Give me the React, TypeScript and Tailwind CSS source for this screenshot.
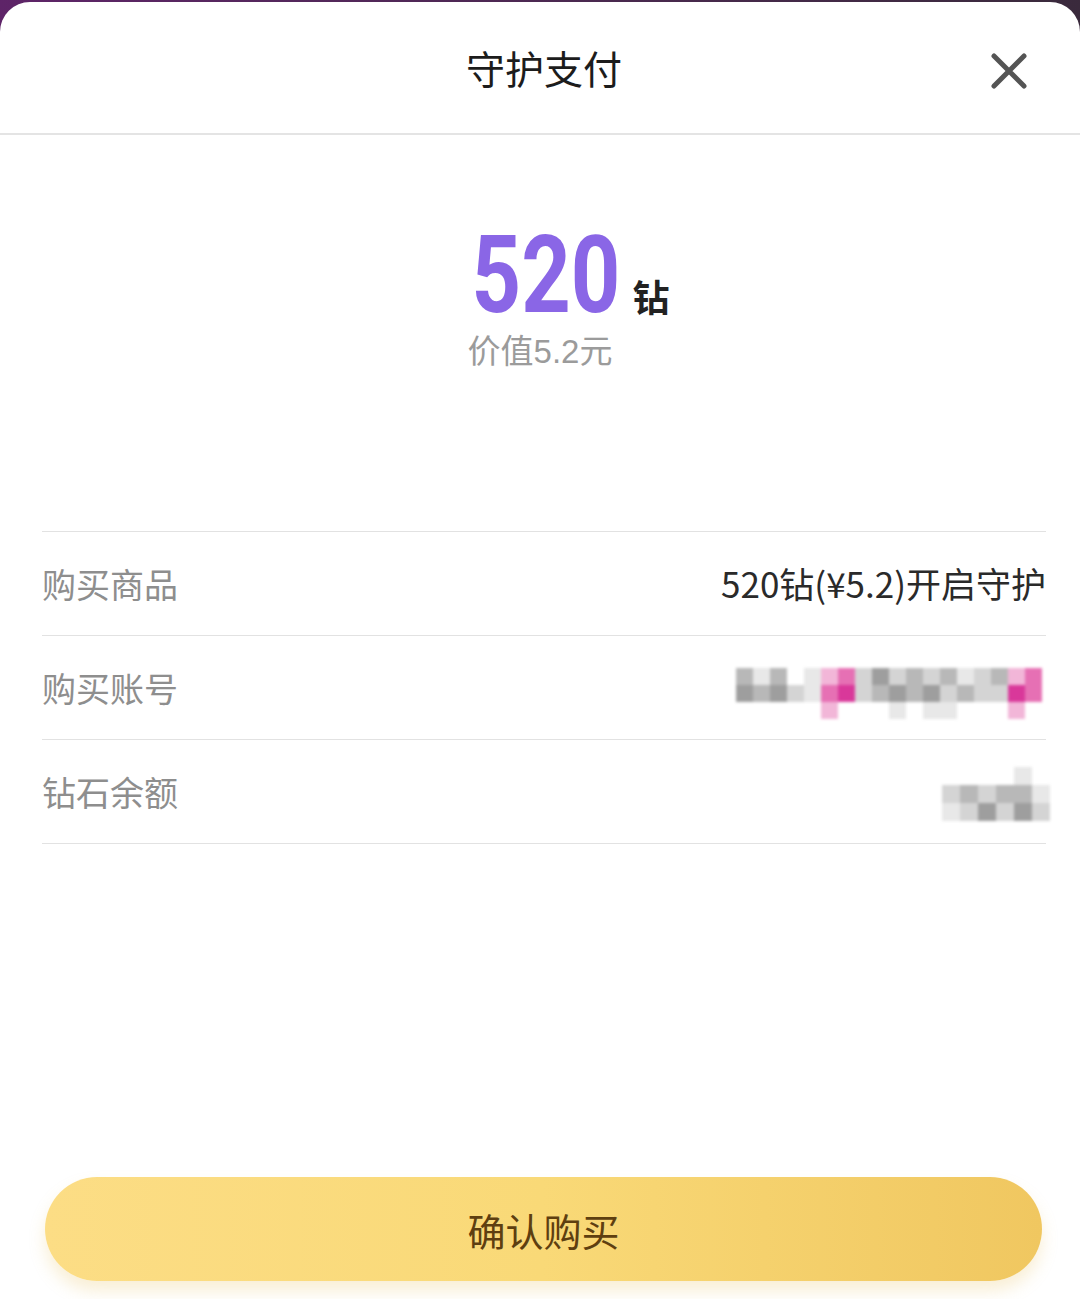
import React from "react";

const cjk = "'Noto Sans CJK SC', 'Noto Sans', sans-serif";

// pixel mosaic used to hide account / balance values
const Mosaic: React.FC<{ cells: string[][]; size?: number }> = ({ cells, size = 20 }) => {
  const w = cells[0].length * size;
  const h = cells.length * size;
  return (
    <svg width={w} height={h} viewBox={`0 0 ${w} ${h}`} style={{ filter: "blur(1.8px)" }}>
      {cells.map((row, y) =>
        row.map((c, x) =>
          c ? <rect key={`${x}-${y}`} x={x * size} y={y * size} width={size} height={size} fill={c} /> : null
        )
      )}
    </svg>
  );
};

const g1 = "#b8b8b8";
const g2 = "#9e9e9e";
const g3 = "#d4d4d4";
const g4 = "#e8e8e8";
const p1 = "#e670b4";
const p2 = "#d9389a";
const p3 = "#f2b6d8";

const accountCells: string[][] = [
  [g1, g4, g1, "", g4, p3, p1, g3, g2, g3, g1, g3, g1, g4, g3, g1, p3, p1],
  [g2, g1, g2, g3, g4, p1, p2, g3, g1, g2, g1, g2, g3, g1, g3, g3, p2, p1],
  ["", "", "", "", "", p3, "", "", "", g4, "", g4, g4, "", "", "", p3, ""],
];

const balanceCells: string[][] = [
  ["", "", "", "", g4, ""],
  [g3, g1, g3, g1, g1, g4],
  [g4, g3, g2, g3, g2, g3],
];

const Row: React.FC<{ label: string; children: React.ReactNode }> = ({ label, children }) => (
  <div className="flex h-[104px] items-center justify-between border-b border-[#e2e2e2]">
    <span className="text-[34px] text-[#8e8e8e]">{label}</span>
    {children}
  </div>
);

const App: React.FC = () => {
  return (
    <div className="h-[1299px] w-[1080px] overflow-hidden bg-gradient-to-r from-[#5e2468] to-[#3a2a3c] pt-[2px]">
      <div className="flex h-full flex-col rounded-t-[30px] bg-white" style={{ fontFamily: cjk }}>
        <div className="relative flex h-[133px] shrink-0 items-center justify-center border-b-2 border-[#e4e4e4]">
          <span className="ml-[8px] text-[39px] text-[#1c1c1c]">守护支付</span>
          <button type="button" className="absolute right-[52px] top-[50px] flex h-[38px] w-[38px] items-center justify-center">
            <svg width="38" height="38" viewBox="0 0 38 38">
              <path d="M4 4L34 34M34 4L4 34" stroke="#545454" strokeWidth="5" strokeLinecap="round" />
            </svg>
          </button>
        </div>

        <div className="flex flex-col items-center pt-[98px]">
          <div className="flex items-end pl-[62px]">
            <div className="flex w-[146px] justify-center">
              <span
                className="inline-block origin-center scale-x-[0.8] text-[108px] font-bold leading-[84px] text-[#8a66e6]"
                style={{ fontFamily: "'Roboto', 'Noto Sans', sans-serif" }}
              >
                520
              </span>
            </div>
            <span className="mb-[2px] ml-[14px] text-[37px] font-bold leading-none text-[#222]">钻</span>
          </div>
          <span className="mt-[16px] text-[33px] leading-none text-[#9b9b9b]">
            价值<span style={{ fontFamily: "'Liberation Sans', sans-serif" }}>5.2</span>元
          </span>
        </div>

        <div className="ml-[42px] mr-[34px] mt-[163px] border-t border-[#e2e2e2]">
          <Row label="购买商品">
            <span className="text-[35px] text-[#2a2a2a]">520钻(¥5.2)开启守护</span>
          </Row>
          <Row label="购买账号">
            <div className="mr-[4px] mt-[12px]">
              <Mosaic cells={accountCells} size={17} />
            </div>
          </Row>
          <Row label="钻石余额">
            <div className="mr-[-4px] mt-[4px]">
              <Mosaic cells={balanceCells} size={18} />
            </div>
          </Row>
        </div>

        <div className="mt-auto mb-[18px] pl-[45px] pr-[38px]">
          <button
            type="button"
            className="flex h-[104px] w-full items-center justify-center rounded-full bg-gradient-to-r from-[#fcdd85] via-[#f9d977] to-[#f0c760] shadow-[0_10px_16px_rgba(230,190,90,0.25)]"
          >
            <span className="text-[38px] text-[#5e3f10]">确认购买</span>
          </button>
        </div>
      </div>
    </div>
  );
};

export default App;
